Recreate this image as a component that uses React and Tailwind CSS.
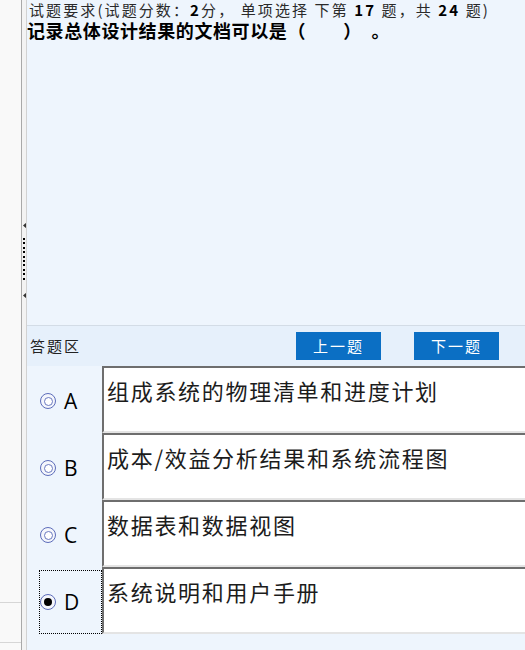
import React from "react";

function Radio({ checked }) {
  return (
    <span className="flex h-[16px] w-[16px] shrink-0 items-center justify-center rounded-full border-[1.5px] border-[#5c6cba] bg-[#f4f6fc]">
      {checked ? (
        <span className="h-[8px] w-[8px] rounded-full bg-black" />
      ) : (
        <span className="h-[9px] w-[9px] rounded-full border-[1.5px] border-[#6a79c0] bg-white" />
      )}
    </span>
  );
}

function Option({ letter, text, checked }) {
  return (
    <div className="flex h-[67px]">
      <div className="flex w-[75px] shrink-0 pl-[12px] pt-[3px]">
        <div
          className={
            checked
              ? "flex flex-1 items-center gap-[8px] border border-dotted border-black pl-[0px]"
              : "flex flex-1 items-center gap-[8px] border border-transparent pl-[0px]"
          }
        >
          <Radio checked={checked} />
          <span className="font-['Open_Sans',sans-serif] text-[21px] leading-none font-medium text-black">{letter}</span>
        </div>
      </div>
      <div className="flex-1 border-t-2 border-l-2 border-b-2 border-t-[#6e6e6e] border-l-[#6e6e6e] border-b-[#e4e4e4] bg-white pl-[3px] pt-[7px] text-[22px] leading-[30px] tracking-[1.7px] text-[#1c1c1c]">
        {text}
      </div>
    </div>
  );
}

function Grip() {
  const dots = Array.from({ length: 10 });
  return (
    <div className="flex flex-col items-start pl-[1px]">
      <div className="h-[222px]" />
      <svg width="4" height="7" viewBox="0 0 4 7">
        <path d="M0 3.5 L4 0 L4 7 Z" fill="#333" />
      </svg>
      <div className="h-[9px]" />
      {dots.map((_, i) => (
        <div key={i} className="mb-[2.4px] h-[2px] w-[2px] bg-black" />
      ))}
      <div className="h-[10px]" />
      <svg width="4" height="7" viewBox="0 0 4 7">
        <path d="M0 3.5 L4 0 L4 7 Z" fill="#333" />
      </svg>
    </div>
  );
}

export default function App() {
  return (
    <div className="flex h-[650px] w-[525px] overflow-hidden bg-white font-['Noto_Sans_CJK_SC',sans-serif]">
      {/* left strip */}
      <div className="flex w-[21px] shrink-0 flex-col bg-[#f9f9f9]">
        <div className="h-[602px]" />
        <div className="h-[1px] bg-[#d6d6d6]" />
        <div className="h-[39px]" />
        <div className="h-[1px] bg-[#d6d6d6]" />
      </div>
      <div className="w-[1px] shrink-0 bg-[#a9a9a9]" />
      <div className="w-[4px] shrink-0 bg-[#f3f3f3]">
        <Grip />
      </div>
      <div className="w-[1px] shrink-0 bg-[#d2d2d2]" />

      {/* main */}
      <div className="flex flex-1 flex-col bg-[#eef5fd]">
        {/* question area */}
        <div className="h-[326px] shrink-0 border-b border-[#d3dce6]">
          <div className="h-[19px] pl-[2px] text-[15px] leading-[19px] tracking-[2.1px] whitespace-nowrap text-[#2a2a2a]">
            试题要求(试题分数：<b className="text-black">2</b>分， 单项选择 下第 <b className="text-black">17</b> 题，共 <b className="text-black">24</b> 题)
          </div>
          <div className="text-[18px] leading-[23px] font-bold tracking-[0.6px] whitespace-nowrap text-black">
            记录总体设计结果的文档可以是（　　）　。
          </div>
        </div>

        {/* answer header */}
        <div className="flex h-[40px] shrink-0 items-center bg-[#e6f0fb] pl-[3px]">
          <span className="text-[15px] tracking-[2px] text-[#222]">答题区</span>
          <div className="ml-auto flex gap-[33px] pr-[26px]">
            <button className="flex h-[28px] w-[85px] items-center justify-center bg-[#0b6fc4] text-[15px] tracking-[2px] text-white">
              上一题
            </button>
            <button className="flex h-[28px] w-[85px] items-center justify-center bg-[#0b6fc4] text-[15px] tracking-[2px] text-white">
              下一题
            </button>
          </div>
        </div>

        {/* options */}
        <div className="flex flex-col">
          <Option letter="A" text="组成系统的物理清单和进度计划" />
          <Option letter="B" text="成本/效益分析结果和系统流程图" />
          <Option letter="C" text="数据表和数据视图" />
          <Option letter="D" text="系统说明和用户手册" checked />
        </div>
      </div>
    </div>
  );
}
